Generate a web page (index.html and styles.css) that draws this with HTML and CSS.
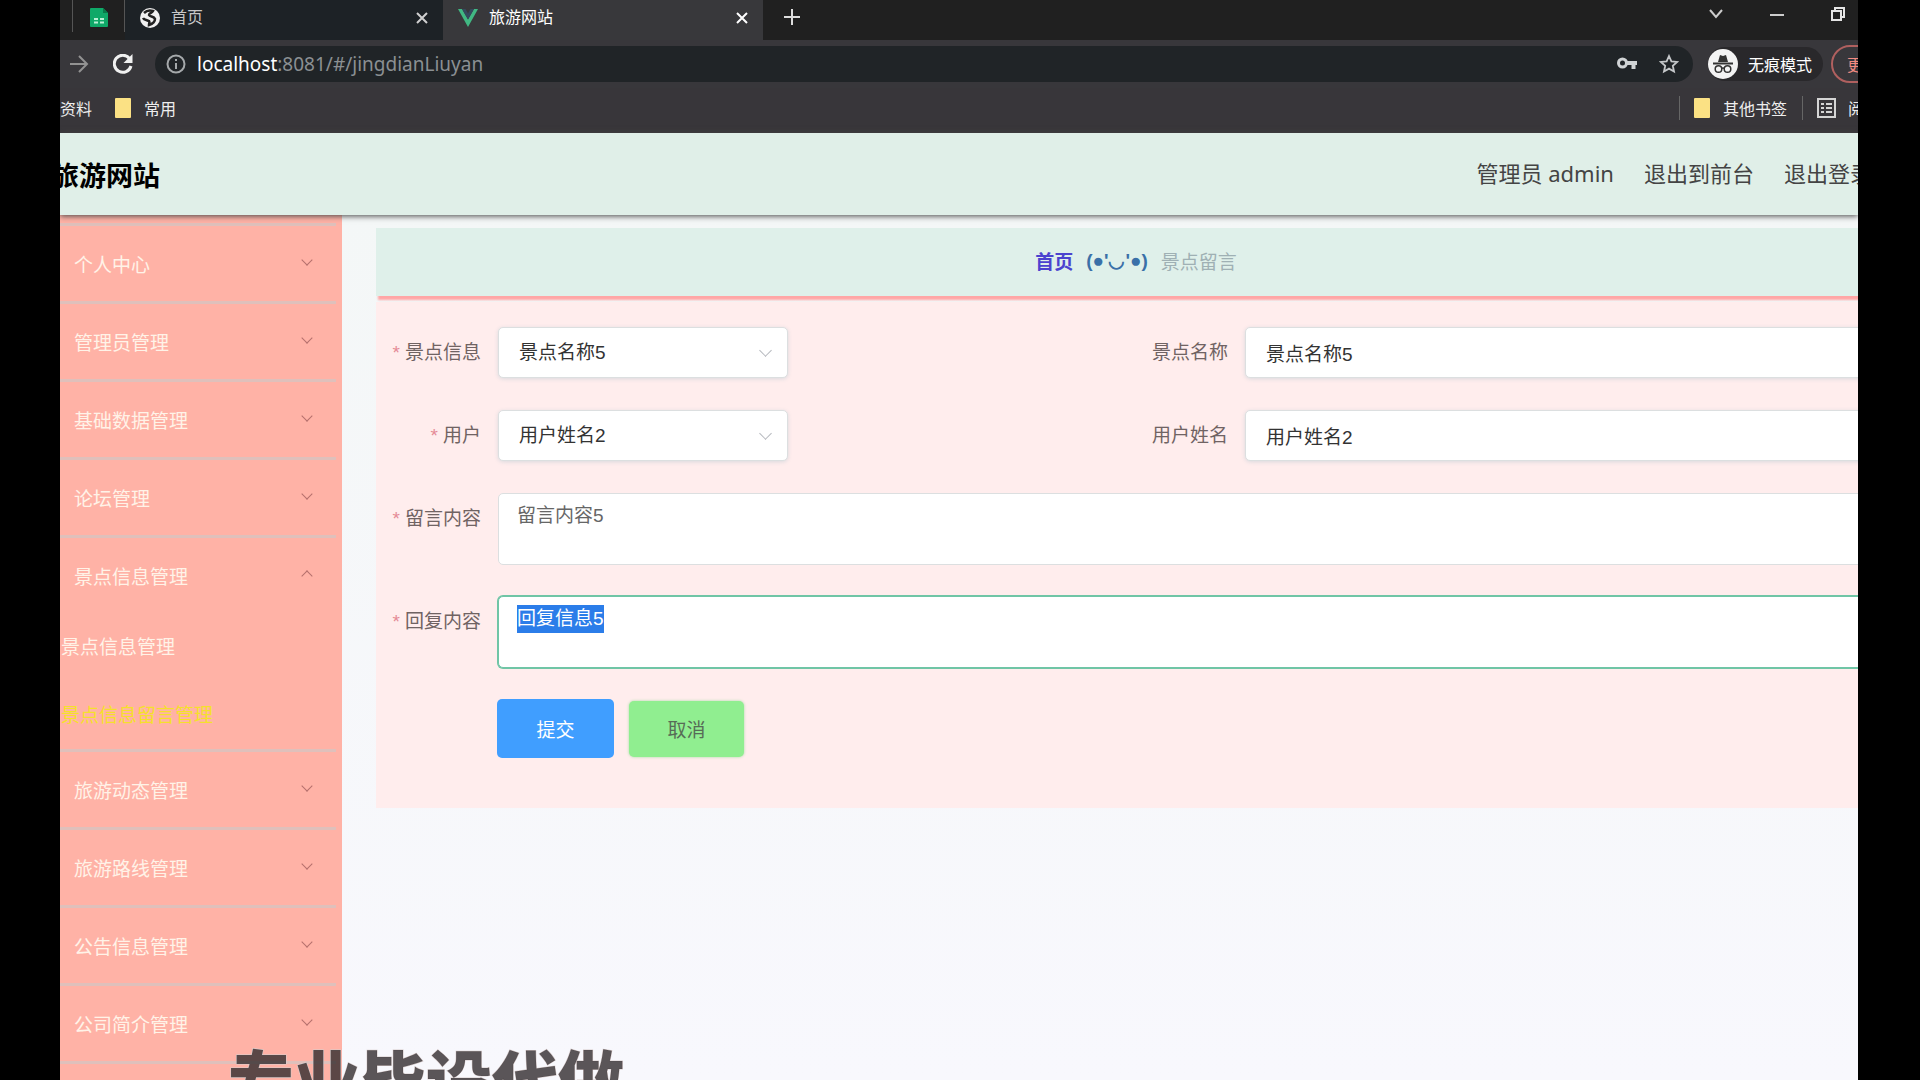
FILE: index.html
```html
<!DOCTYPE html>
<html lang="zh-CN">
<head>
    <meta charset="UTF-8">
    <meta name="viewport" content="width=device-width, initial-scale=1.0">
    <title>旅游网站</title>
    <link rel="stylesheet" href="styles.css">
</head>
<body>
    <div class="screen">
        <!-- 浏览器窗口 -->
        <div class="tabs">
            <div class="tab-pinned">
                <svg width="18" height="19" viewBox="0 0 18 19"><path d="M1 0h12l5 5v13a1 1 0 0 1-1 1H1a1 1 0 0 1-1-1V1a1 1 0 0 1 1-1z" fill="#0fa968"/><path d="M13 0l5 5h-5z" fill="#087a49"/><path d="M4 11h4M10 11h4M4 14.500h4M10 14.500h4" stroke="#b9f0d5" stroke-width="2"/></svg>
            </div>
            <div class="tab">
                <svg width="20" height="20" viewBox="0 0 20 20"><circle cx="10" cy="10" r="10" fill="#f1f1f1"/><path d="M4 5c3-3 6-3 9-2-1 2-4 2-4 4 1 2 5 1 6 4 0 3-3 5-6 6 0-2 1-3 0-4-2-1-5-1-6-3" fill="none" stroke="#222" stroke-width="2.500"/></svg>
                <span class="tab-title">首页</span>
                <button class="icon-btn" aria-label="关闭"><svg width="12" height="12" viewBox="0 0 12 12"><path d="M1 1l10 10M11 1L1 11" stroke="#d0d0d0" stroke-width="2"/></svg></button>
            </div>
            <div class="tab active">
                <svg width="20" height="18" viewBox="0 0 20 18"><path d="M0 0h4l6 10.500L16 0h4L10 18z" fill="#41b883"/><path d="M4 0h3.500L10 4.500 12.500 0H16l-6 10.500z" fill="#35495e"/></svg>
                <span class="tab-title">旅游网站</span>
                <button class="icon-btn" aria-label="关闭"><svg width="12" height="12" viewBox="0 0 12 12"><path d="M1 1l10 10M11 1L1 11" stroke="#fff" stroke-width="2"/></svg></button>
            </div>
            <button class="icon-btn new-tab" aria-label="新标签页"><svg width="16" height="16" viewBox="0 0 16 16"><path d="M8 0v16M0 8h16" stroke="#ddd" stroke-width="2"/></svg></button>
            <div class="window-btns">
                <button class="icon-btn" aria-label="搜索标签页"><svg width="14" height="10" viewBox="0 0 14 10"><path d="M1 1l6 7 6-7" fill="none" stroke="#ccc" stroke-width="2"/></svg></button>
                <button class="icon-btn" aria-label="最小化"><svg width="14" height="10" viewBox="0 0 14 10"><path d="M0 6h14" stroke="#ccc" stroke-width="2"/></svg></button>
                <button class="icon-btn" aria-label="还原"><svg width="14" height="14" viewBox="0 0 14 14"><path d="M1 4h9v9H1zM4 4V1h9v9h-3" fill="none" stroke="#e5e5e5" stroke-width="2"/></svg></button>
            </div>
        </div>

        <div class="toolbar">
            <button class="icon-btn" aria-label="前进"><svg width="20" height="18" viewBox="0 0 20 18"><path d="M0 9h17M9 1l8 8-8 8" fill="none" stroke="#929292" stroke-width="2"/></svg></button>
            <button class="icon-btn reload" aria-label="刷新"><svg width="20" height="20" viewBox="0 0 20 20"><path d="M16.500 4.500A8.500 8.500 0 1 0 18 12" fill="none" stroke="#f0f0f0" stroke-width="3"/><path d="M19.500 0v9h-9z" fill="#f0f0f0"/></svg></button>
            <div class="address">
                <svg width="20" height="20" viewBox="0 0 20 20"><circle cx="10" cy="10" r="8.500" fill="none" stroke="#a5a9ab" stroke-width="2"/><path d="M10 9v6M10 5v2" stroke="#a5a9ab" stroke-width="2"/></svg>
                <div class="url"><b>localhost</b>:8081/#/jingdianLiuyan</div>
                <svg width="20" height="14" viewBox="0 0 20 14"><circle cx="5.500" cy="6" r="4" fill="none" stroke="#d0d3d5" stroke-width="3"/><path d="M9 6h11M16.500 6v6" stroke="#d0d3d5" stroke-width="4"/></svg>
                <svg width="20" height="20" viewBox="0 0 20 20"><path d="M10 2l2.400 5.300 5.700.6-4.300 3.900 1.200 5.700-5-2.900-5 2.900 1.200-5.700L1.900 7.900l5.700-.6z" fill="none" stroke="#c5c8ca" stroke-width="1.800"/></svg>
            </div>
            <button class="incognito">
                <svg width="30" height="30" viewBox="0 0 30 30"><circle cx="15" cy="15" r="15" fill="#f3f3f3"/><path d="M10 13l2-7 3 1 3-1 2 7z" fill="#333"/><path d="M5 14.500h20" stroke="#333" stroke-width="2"/><g fill="none" stroke="#333" stroke-width="1.500"><circle cx="10.500" cy="20" r="3.300"/><circle cx="19.500" cy="20" r="3.300"/><path d="M13.500 19.500q1.500-1 3 0"/></g></svg>
                <span>无痕模式</span>
            </button>
            <button class="update">更新</button>
        </div>

        <div class="bookmarks">
            <a href="#">资料</a>
            <a href="#" class="folder">常用</a>
            <div class="bookmarks-right">
                <a href="#" class="folder">其他书签</a>
                <a href="#" class="reading">
                    <svg width="19" height="20" viewBox="0 0 19 20"><path d="M1 1h17v18H1z" fill="none" stroke="#d5d5d5" stroke-width="2"/><path d="M4 6h3M9 6h6M4 10h3M9 10h6M4 14h3M9 14h6" stroke="#d5d5d5" stroke-width="2"/></svg>
                    <span>阅读清单</span>
                </a>
            </div>
        </div>

        <!-- 后台页面 -->
        <header class="header">
            <h1>旅游网站</h1>
            <nav>
                <span>管理员 admin</span>
                <a href="#">退出到前台</a>
                <a href="#">退出登录</a>
            </nav>
        </header>

        <div class="layout">
            <aside class="sidebar">
                <ul class="menu">
                    <li><a href="#">个人中心<i class="arrow"></i></a></li>
                    <li><a href="#">管理员管理<i class="arrow"></i></a></li>
                    <li><a href="#">基础数据管理<i class="arrow"></i></a></li>
                    <li><a href="#">论坛管理<i class="arrow"></i></a></li>
                    <li>
                        <a href="#">景点信息管理<i class="arrow up"></i></a>
                        <ul class="submenu">
                            <li><a href="#">景点信息管理</a></li>
                            <li><a href="#" class="current">景点信息留言管理</a></li>
                        </ul>
                    </li>
                    <li><a href="#">旅游动态管理<i class="arrow"></i></a></li>
                    <li><a href="#">旅游路线管理<i class="arrow"></i></a></li>
                    <li><a href="#">公告信息管理<i class="arrow"></i></a></li>
                    <li><a href="#">公司简介管理<i class="arrow"></i></a></li>
                    <li><a href="#"></a></li>
                </ul>
            </aside>

            <main class="main">
                <div class="breadcrumb">
                    <a href="#">首页</a>
                    <span class="face">(●'◡'●)</span>
                    <span class="here">景点留言</span>
                </div>

                <form class="form">
                    <div class="item">
                        <label for="jingdian" class="required">景点信息</label>
                        <div class="select">
                            <select id="jingdian"><option>景点名称5</option></select>
                        </div>
                    </div>
                    <div class="item">
                        <label for="jingdianName">景点名称</label>
                        <input type="text" id="jingdianName" value="景点名称5">
                    </div>
                    <div class="item">
                        <label for="yonghu" class="required">用户</label>
                        <div class="select">
                            <select id="yonghu"><option>用户姓名2</option></select>
                        </div>
                    </div>
                    <div class="item">
                        <label for="yonghuName">用户姓名</label>
                        <input type="text" id="yonghuName" value="用户姓名2">
                    </div>
                    <div class="item wide">
                        <label for="liuyan" class="required">留言内容</label>
                        <textarea id="liuyan">留言内容5</textarea>
                    </div>
                    <div class="item wide">
                        <label for="reply" class="required">回复内容</label>
                        <textarea id="reply">回复信息5</textarea>
                    </div>
                    <div class="buttons wide">
                        <button type="button" class="submit">提交</button>
                        <button type="button" class="cancel">取消</button>
                    </div>
                </form>
            </main>
        </div>

        <div class="watermark">专业毕设代做</div>
    </div>

    <script>
        const reply = document.getElementById('reply');
        reply.focus({ preventScroll: true });
        reply.select();
    </script>
</body>
</html>
```
FILE: styles.css
```css
* {
    box-sizing: border-box;
}
body {
    margin: 0;
    background-color: #000;
    font-family: "Liberation Sans", "Noto Sans CJK SC", sans-serif;
    overflow: hidden;
}
button, input, select, textarea {
    font-family: inherit;
}
a {
    color: inherit;
    text-decoration: none;
}
ul {
    list-style: none;
    margin: 0;
    padding: 0;
}
svg {
    display: block;
    flex: none;
}
.screen {
    position: relative;
    height: 100vh;
    margin: 0 62px 0 60px;
    overflow: hidden;
    display: flex;
    flex-direction: column;
    background-color: #f8f9fc;
}

/* 标签栏 */
.icon-btn {
    display: flex;
    padding: 0;
    border: none;
    background: none;
}
.tabs {
    display: flex;
    flex: none;
    height: 40px;
    padding-left: 12px;
    background-color: #202020;
    color: #c8c8c8;
    font-size: 16px;
}
.tab-pinned {
    display: flex;
    justify-content: center;
    width: 53px;
    height: 32px;
    padding-top: 8px;
    border-left: 1px solid #555;
    border-right: 1px solid #555;
}
.tab {
    display: flex;
    align-items: center;
    gap: 11px;
    width: 318px;
    padding: 0 15px 5px;
    background-color: #1d2226;
}
.tab.active {
    width: 320px;
    background-color: #38383b;
    color: #fff;
}
.tab-title {
    flex: 1;
    line-height: 30px;
}
.new-tab {
    padding: 9px 21px;
}
.window-btns {
    display: flex;
    align-items: center;
    gap: 47px;
    height: 27px;
    margin-left: auto;
    padding-right: 13px;
}

/* 地址栏 */
.toolbar {
    display: flex;
    align-items: center;
    flex: none;
    height: 48px;
    padding-left: 10px;
    background-color: #38373b;
}
.reload {
    margin: 0 22px 0 23px;
}
.address {
    display: flex;
    align-items: center;
    flex: 1;
    gap: 22px;
    height: 36px;
    padding: 0 14px 0 11px;
    border-radius: 18px;
    background-color: #202427;
}
.url {
    flex: 1;
    margin-left: -11px;
    color: #8b9093;
    font-family: "Noto Sans", sans-serif;
    font-size: 19px;
    line-height: 30px;
}
.url b {
    color: #fff;
    font-weight: normal;
}
.incognito {
    display: flex;
    align-items: center;
    gap: 10px;
    height: 34px;
    margin: 0 8px 0 15px;
    padding: 0 11px 0 0;
    border: none;
    border-radius: 17px;
    background-color: #29282b;
    color: #fff;
    font-size: 16px;
}
.update {
    width: 96px;
    height: 38px;
    margin-right: -69px;
    padding: 0 14px;
    border: 2px solid #b0605f;
    border-radius: 19px;
    background: none;
    color: #f28b82;
    font-size: 16px;
    text-align: left;
}

/* 书签栏 */
.bookmarks {
    display: flex;
    align-items: center;
    gap: 23px;
    flex: none;
    height: 45px;
    padding-bottom: 5px;
    background-color: #38363a;
    color: #eee;
    font-size: 16px;
    white-space: nowrap;
}
.folder {
    display: flex;
    align-items: center;
    gap: 13px;
}
.folder::before {
    content: "";
    width: 16px;
    height: 20px;
    border-radius: 1px;
    background-color: #fbe184;
}
.bookmarks-right {
    display: flex;
    gap: 15px;
    margin-left: auto;
    margin-right: -54px;
}
.bookmarks-right a {
    padding-left: 14px;
    border-left: 1px solid #666;
}
.reading {
    display: flex;
    align-items: center;
    gap: 12px;
}

/* 顶部 */
.header {
    position: relative;
    z-index: 1;
    display: flex;
    align-items: center;
    justify-content: space-between;
    flex: none;
    height: 82px;
    background-color: #e0efe8;
    box-shadow: 0 1px 6px #444;
}
.header h1 {
    margin: 0 0 0 -8px;
    font-size: 27px;
    color: #000;
}
.header nav {
    display: flex;
    gap: 30px;
    margin-right: -14px;
    padding-bottom: 4px;
    color: #444;
    font-family: "Noto Sans", "Noto Sans CJK SC", sans-serif;
    font-size: 22px;
    white-space: nowrap;
}
.layout {
    display: flex;
    flex: 1;
    min-height: 0;
}

/* 侧边栏 */
.sidebar {
    flex: none;
    width: 282px;
    padding: 8px 6px 0 0;
    background-color: #ffb2a6;
    color: #fff3e8;
    font-size: 19px;
}
.menu > li {
    border-top: 3px solid #dfc0bb;
}
.menu > li > a {
    display: flex;
    align-items: center;
    justify-content: space-between;
    height: 75px;
    padding: 0 25px 0 14px;
}
.arrow {
    width: 8px;
    height: 8px;
    margin-bottom: 8px;
    border-right: 1px solid #b5706c;
    border-bottom: 1px solid #b5706c;
    transform: rotate(45deg);
}
.arrow.up {
    margin-bottom: 0;
    transform: rotate(225deg);
}
.submenu a {
    display: block;
    height: 68px;
    padding-left: 1px;
    line-height: 70px;
}
.submenu .current {
    color: #f5e02c;
}

/* 内容 */
.main {
    flex: 1;
    margin-right: -38px;
    padding: 13px 0 0 34px;
    background-color: #f6f8fa;
    background-image: linear-gradient(#f4f7f7, #f8f8fd);
}
.breadcrumb {
    display: flex;
    align-items: center;
    justify-content: center;
    gap: 13px;
    height: 68px;
    padding-bottom: 4px;
    background-color: #dff0ea;
    box-shadow: 0 6px 2px -2px #ffa6a6;
    font-size: 19px;
}
.breadcrumb a {
    color: #4b43cf;
    font-weight: bold;
}
.face {
    color: #3a70a8;
    font-weight: bold;
}
.here {
    color: #9fb0b4;
}
.form {
    display: grid;
    grid-template-columns: 1fr 1fr;
    row-gap: 31px;
    margin-top: 6px;
    padding: 25px 26px 50px 0;
    background-color: #ffeded;
}
.wide {
    grid-column: 1 / 3;
}
.item {
    display: flex;
}
.item label {
    flex: none;
    width: 122px;
    padding-right: 17px;
    color: #706363;
    font-size: 19px;
    line-height: 52px;
    text-align: right;
}
.required::before {
    content: "*";
    margin-right: 5px;
    color: #e58a96;
}
.item input, .item select, .item textarea {
    width: 100%;
    border: 1px solid #dcdfe0;
    border-radius: 5px;
    background-color: #fff;
    color: #333;
    font-size: 19px;
    outline: none;
}
.item input, .item select {
    height: 51px;
    padding: 0 20px;
    box-shadow: 0 1px 4px #d9d9de;
}
.select {
    position: relative;
    width: 290px;
}
.select select {
    appearance: none;
}
.select::after {
    content: "";
    position: absolute;
    top: 19px;
    right: 18px;
    width: 8px;
    height: 8px;
    border-right: 1px solid #b5b8bd;
    border-bottom: 1px solid #b5b8bd;
    transform: rotate(45deg);
}
.item textarea {
    display: block;
    height: 72px;
    padding: 8px 18px;
    color: #666;
    line-height: 28px;
    resize: none;
}
.item textarea:focus {
    border-color: #70c5a6;
    box-shadow: 0 0 0 1px #70c5a6;
}
.item textarea::selection {
    background-color: #2b7de9;
    color: #fff;
}
.buttons {
    display: flex;
    align-items: center;
    gap: 15px;
    padding-left: 121px;
}
.buttons button {
    border: none;
    border-radius: 5px;
    font-size: 19px;
}
.submit {
    width: 117px;
    height: 59px;
    background-color: #409eff;
    color: #fff;
}
.cancel {
    width: 115px;
    height: 56px;
    background-color: #90ee90;
    box-shadow: 0 0 3px #a5dca5;
    color: #576b57;
}

/* 水印 */
.watermark {
    position: absolute;
    left: 168px;
    bottom: -53px;
    color: rgba(50, 44, 46, 0.8);
    font-size: 66px;
    font-weight: 900;
    line-height: 100px;
    -webkit-text-stroke: 1px #d8cdcd;
    paint-order: stroke;
    white-space: nowrap;
}
```
